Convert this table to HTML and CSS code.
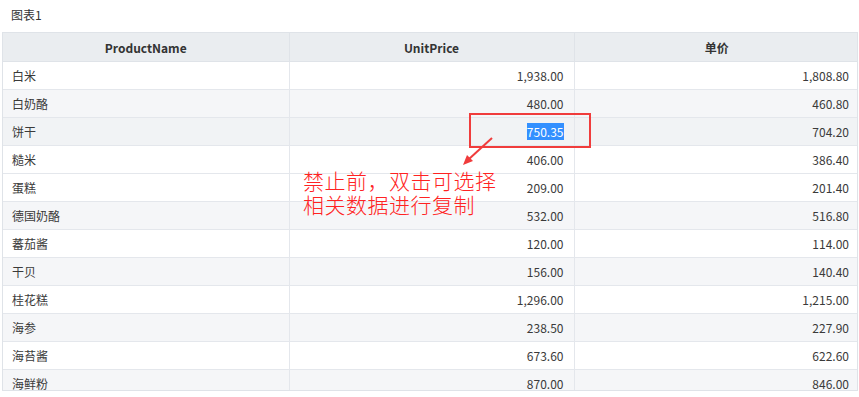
FILE: index.html
```html
<!DOCTYPE html>
<html lang="zh-CN">
<head>
<meta charset="utf-8">
<title>图表1</title>
<link rel="stylesheet" href="styles.css">
</head>
<body>
<div class="page">
  <div class="title">图表1</div>
  <div class="grid-wrap">
    <table class="grid">
      <colgroup>
        <col class="c1"><col class="c2"><col class="c3">
      </colgroup>
      <thead>
        <tr><th>ProductName</th><th>UnitPrice</th><th>单价</th></tr>
      </thead>
      <tbody>
        <tr><td>白米</td><td class="num">1,938.00</td><td class="num">1,808.80</td></tr>
        <tr class="alt"><td>白奶酪</td><td class="num">480.00</td><td class="num">460.80</td></tr>
        <tr class="hover"><td>饼干</td><td class="num"><span class="sel">750.35</span></td><td class="num">704.20</td></tr>
        <tr><td>糙米</td><td class="num">406.00</td><td class="num">386.40</td></tr>
        <tr><td>蛋糕</td><td class="num">209.00</td><td class="num">201.40</td></tr>
        <tr class="alt"><td>德国奶酪</td><td class="num">532.00</td><td class="num">516.80</td></tr>
        <tr><td>蕃茄酱</td><td class="num">120.00</td><td class="num">114.00</td></tr>
        <tr class="alt"><td>干贝</td><td class="num">156.00</td><td class="num">140.40</td></tr>
        <tr><td>桂花糕</td><td class="num">1,296.00</td><td class="num">1,215.00</td></tr>
        <tr class="alt"><td>海参</td><td class="num">238.50</td><td class="num">227.90</td></tr>
        <tr><td>海苔酱</td><td class="num">673.60</td><td class="num">622.60</td></tr>
        <tr class="alt"><td>海鲜粉</td><td class="num">870.00</td><td class="num">846.00</td></tr>
      </tbody>
    </table>
  </div>
  <div class="mark-box"></div>
  <svg class="mark-arrow" width="40" height="36" viewBox="0 0 40 36">
    <line x1="33" y1="3" x2="10" y2="24" stroke="#f03c3c" stroke-width="2"/>
    <polygon points="4,30 8,20 14,26" fill="#f03c3c"/>
  </svg>
  <div class="note">禁止前，双击可选择<br>相关数据进行复制</div>
</div>
</body>
</html>
```

FILE: styles.css
```css
html, body {
  margin: 0;
  padding: 0;
  background: #fff;
}
.page {
  position: relative;
  width: 859px;
  height: 397px;
  overflow: hidden;
  font-family: "Noto Sans CJK SC", "Noto Sans", sans-serif;
  font-size: 12px;
  color: #333;
}
.title {
  padding: 6px 0 0 11px;
  height: 32px;
  line-height: 18px;
  box-sizing: border-box;
  color: #333;
}
.grid-wrap {
  margin-left: 2px;
  width: 856px;
  height: 359px;
  box-sizing: border-box;
  border: 1px solid #dfe3e8;
  border-top: none;
  overflow: hidden;
}
.grid {
  width: 100%;
  border-collapse: collapse;
  table-layout: fixed;
}
.c1 { width: 286px; }
.c2 { width: 285px; }
.c3 { width: 285px; }
.grid th {
  height: 28px;
  padding: 0;
  background: #eaedf0;
  font-weight: bold;
  color: #333;
  border: 1px solid #dfe3e8;
  text-align: center;
}
.grid th:first-child, .grid td:first-child { border-left: none; }
.grid th:last-child, .grid td:last-child { border-right: none; }
.grid td {
  height: 27px;
  padding: 0 10px 0 9px;
  border: 1px solid #e4e7ec;
  border-top: none;
  white-space: nowrap;
  color: #3a3a3a;
}
.grid tr.alt td { background: #f5f6f8; }
.grid tr.hover td { background: #f1f3f5; }
.grid td.num { text-align: right; }
.sel {
  background: #3390ff;
  color: #fff;
}
.mark-box {
  position: absolute;
  left: 469px;
  top: 113px;
  width: 118px;
  height: 31px;
  border: 2px solid #f03c3c;
}
.mark-arrow {
  position: absolute;
  left: 459px;
  top: 135px;
}
.note {
  position: absolute;
  left: 303px;
  top: 168px;
  font-size: 21px;
  line-height: 24px;
  font-weight: 300;
  color: #f22;
  letter-spacing: 0.5px;
}
```
